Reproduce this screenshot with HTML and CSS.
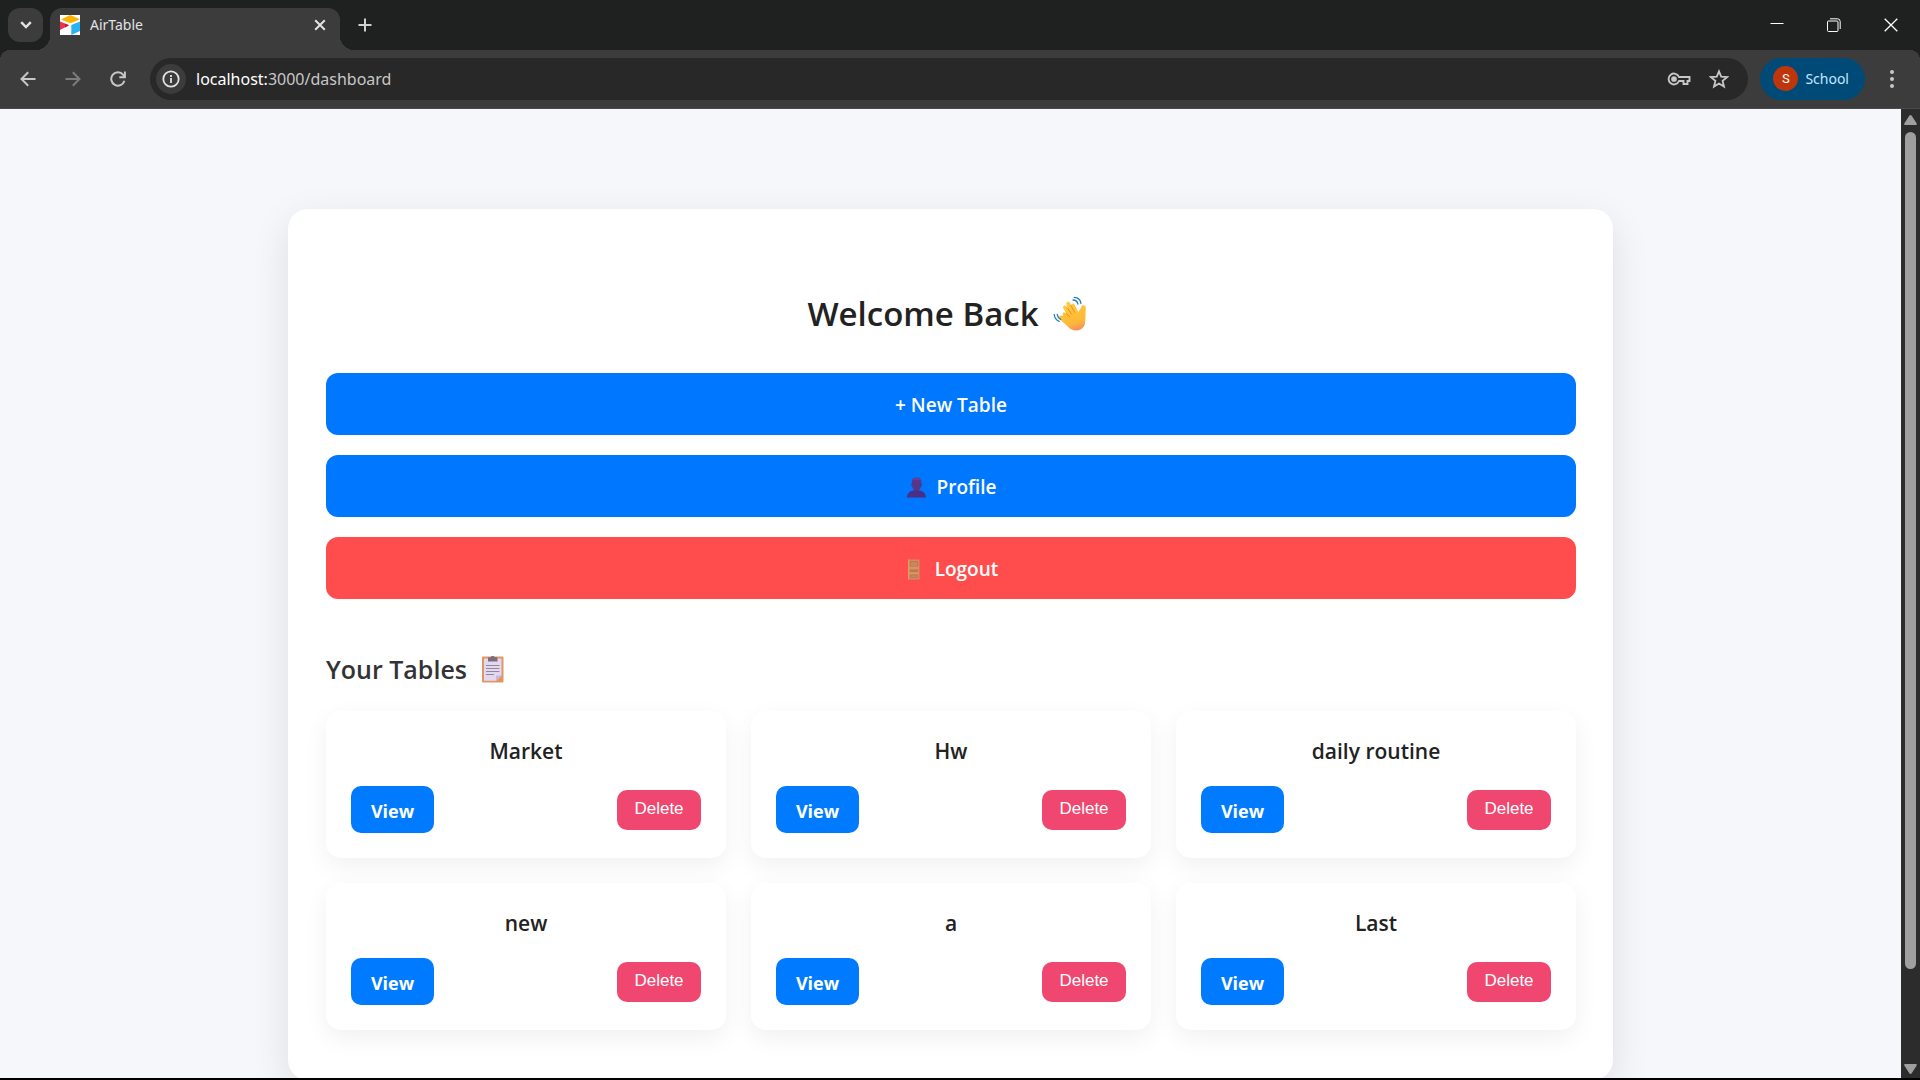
FILE: index.html
```html
<!DOCTYPE html>
<html lang="en">
<head>
<meta charset="utf-8">
<meta name="viewport" content="width=device-width, initial-scale=1">
<title>AirTable</title>
<link rel="stylesheet" href="styles.css">
</head>
<body>
<div class="browser">
  <header class="tabstrip">
    <button class="tab-search" aria-label="Search tabs">
      <svg width="12" height="8" viewBox="0 0 12 8" fill="none" stroke="#e3e3e3" stroke-width="2.4"><path d="M1.2 1.2 6 6l4.800-4.800"/></svg>
    </button>
    <div class="tab">
      <svg class="favicon" width="20" height="20" viewBox="0 0 20 20">
        <rect width="20" height="20" fill="#fff"/>
        <path fill="#fcb400" d="M1 4.500 9.500.3h1.500L19.300 4l-.1.700-8.700 3.500z"/>
        <path fill="#2ab2f5" d="M11.300 10 20 6.600V16l-8.700 4z"/>
        <path fill="#f0304f" d="M0 6.500 9 10.300 0 15z"/>
        <path fill="#ba1e45" d="m4.800 8.500 4.200 1.800-4 2.200z"/>
      </svg>
      <span class="tab-title">AirTable</span>
      <button class="icon-btn" aria-label="Close tab">
        <svg width="12" height="12" viewBox="0 0 12 12" stroke="#e3e3e3" stroke-width="2"><path d="m1.200 1.200 9.600 9.600M10.800 1.200l-9.600 9.600"/></svg>
      </button>
    </div>
    <button class="icon-btn new-tab" aria-label="New tab">
      <svg width="14" height="14" viewBox="0 0 14 14" stroke="#d0d0d0" stroke-width="2"><path d="M7 .5v13M.5 7h13"/></svg>
    </button>
    <div class="window-controls">
      <button class="win-btn" aria-label="Minimize"><svg width="14" height="14" viewBox="0 0 14 14" stroke="#fff"><path d="M.5 5.500h13"/></svg></button>
      <button class="win-btn" aria-label="Restore"><svg width="14" height="14" viewBox="0 0 14 14" fill="none" stroke="#fff"><rect x=".5" y="3" width="10.500" height="10.500" rx="1"/><path d="M3 .8h7.500a2.700 2.700 0 0 1 2.700 2.700V11"/></svg></button>
      <button class="win-btn" aria-label="Close"><svg width="14" height="14" viewBox="0 0 14 14" stroke="#fff" stroke-width="1.300"><path d="m.7.7 12.600 12.600M13.300.7.7 13.300"/></svg></button>
    </div>
  </header>

  <nav class="toolbar">
    <button class="nav-btn" aria-label="Back"><svg width="16" height="16" viewBox="0 0 16 16" fill="none" stroke="#c7c7c7" stroke-width="2"><path d="M15.500 8H2M8.200 1.200 1.500 8l6.700 6.800"/></svg></button>
    <button class="nav-btn" aria-label="Forward"><svg width="16" height="16" viewBox="0 0 16 16" fill="none" stroke="#7c7c7c" stroke-width="2"><path d="M.5 8H14M7.800 1.200 14.500 8l-6.700 6.800"/></svg></button>
    <button class="nav-btn" aria-label="Reload"><svg width="16" height="16" viewBox="0 0 16 16" fill="none" stroke="#c7c7c7" stroke-width="2"><path d="M14.400 9.800A6.700 6.700 0 1 1 13.200 3.800L14.600 6"/><path d="M14.900.6v5.600H9.300"/></svg></button>
    <div class="omnibox">
      <button class="site-info" aria-label="Site information"><svg width="18" height="18" viewBox="0 0 18 18" fill="none" stroke="#e3e3e3" stroke-width="1.800"><circle cx="9" cy="9" r="7.700"/><path d="M9 8v5M9 5v1.900"/></svg></button>
      <span class="url"><span class="host">localhost:</span>3000/dashboard</span>
      <button class="icon-btn" aria-label="Passwords"><svg width="24" height="16" viewBox="0 0 24 16" fill="none" stroke="#c7c7c7" stroke-width="1.900"><path d="M12 6h10.500v4h-2v3h-4v-3H12a5.400 5.400 0 1 1 0-4z"/><circle cx="7" cy="8" r="1.900" fill="#c7c7c7"/></svg></button>
      <button class="icon-btn" aria-label="Bookmark this page"><svg width="20" height="20" viewBox="0 0 20 20" fill="none" stroke="#c7c7c7" stroke-width="1.800"><path d="m10 2.300 2.200 5.300 5.900.5-4.500 3.800 1.400 5.700-5-3.100-5 3.100 1.400-5.700-4.500-3.800 5.900-.5z"/></svg></button>
    </div>
    <button class="profile-chip"><span class="avatar">S</span><span>School</span></button>
    <button class="icon-btn menu-btn" aria-label="Menu"><svg width="4" height="18" viewBox="0 0 4 18" fill="#c7c7c7"><circle cx="2" cy="2" r="2"/><circle cx="2" cy="9" r="2"/><circle cx="2" cy="16" r="2"/></svg></button>
  </nav>

  <div class="viewport">
    <main class="page">
      <section class="dashboard">
        <h1 class="welcome">Welcome Back
          <svg width="36" height="36" viewBox="0 0 36 36" aria-hidden="true">
            <defs><linearGradient id="hand" x1=".3" y1="0" x2=".6" y2="1"><stop offset="0" stop-color="#ffca3e"/><stop offset=".75" stop-color="#ffb836"/><stop offset="1" stop-color="#f59060"/></linearGradient></defs>
            <path fill="url(#hand)" d="M10.200 19.200c-1.600-1.900.5-4 2.300-2.400l1 .9-3.200-5.600c-1.200-2.200 1.600-3.800 3-1.800l1.400 2-1.300-4c-.8-2.500 2.400-3.600 3.500-1.200l1.200 2.500c-.4-2.300 2.500-3 3.400-.9L25.300 16c.9-1.500 2.400-2.900 2.700-4.700.5-2.800 5-2.500 4.800.2l-.5 13.200c0 5.800-3.900 9.800-9 9.800-3.500 0-5.800-1-8.300-3.700l-8.300-7.700c-2-2.200.3-4.600 2.500-3.200z"/>
            <path fill="none" stroke="#e98a22" stroke-width=".9" stroke-linecap="round" d="m13.500 17.700 3.200 3M14.700 12.300l4.200 6.200M18.100 9.600l3.500 6.700"/>
            <path fill="none" stroke="#2a7fc0" stroke-width="1.300" stroke-linecap="round" d="M1.200 18.300c.3 3.600 2.200 6 5 7M4.200 18.300c.3 2.200 1.500 4 3.500 5.200M21.200 1.300c4 .1 6.300 2.600 6.700 6.200M20 4c2.600.1 4.400 1.500 4.900 4"/>
          </svg>
        </h1>

        <div class="actions">
          <button class="action">+ New Table</button>
          <button class="action">
            <svg width="21" height="21" viewBox="0 0 21 21" aria-hidden="true"><path fill="#4a2f86" d="M1 20.500c.2-4.700 3.500-6.500 7.200-7.200l2.300-.5 2.300.5c3.700.7 7 2.500 7.200 7.200z"/><path fill="#56368b" d="M5.800 5.500C5.800 2.500 7.200.8 9.500.8h2.200c2.300 0 3.700 1.700 3.700 4.700v1.200c1 .2 1 2.200-.3 2.500-.5 2.500-2.200 4.600-4.500 4.600S6.600 11.700 6.100 9.200C4.800 8.900 4.800 6.900 5.800 6.700z"/><path fill="#6a3f93" d="M7 2.500C7.600 1.300 8.500.8 9.500.8h2.200c1.200 0 2.100.6 2.700 1.600l-1.600.8H8.400z"/></svg>
            Profile
          </button>
          <button class="action action-danger">
            <svg width="21" height="21" viewBox="0 0 21 21" aria-hidden="true"><rect x="4" y=".5" width="11.500" height="20" rx=".5" fill="#cf8d62"/><path fill="#bf7850" d="M6 2h8v5.500H6zM6 10.500h8v2.500H6zM6 15.500h8v3.500H6z"/><path fill="#c98660" d="M7 3h6v4H7zM7 16.500h6V18H7z"/><path fill="#df9e60" d="M5 8.500h10v1H5zM5 13.800h10v1H5zM4 .5h1v20H4z"/></svg>
            Logout
          </button>
        </div>

        <h2 class="section-title">Your Tables
          <svg width="28" height="28" viewBox="0 0 28 28" aria-hidden="true"><rect x="3" y="1.500" width="21.500" height="26" rx="1" fill="#e19763"/><path fill="#e3d9ef" d="M5 3.500h17.500v17L17 25.800H5z"/><path fill="#c8b8df" d="M17 25.800v-4.300c0-.7.300-1 1-1h4.500z"/><path fill="#7c6c80" d="M9 3.500c0-1 .5-1.300 1.500-1.300h1.300c.3-1.600 3.600-1.600 3.900 0H17c1 0 1.500.3 1.500 1.300v3H9z"/><path stroke="#9385a3" stroke-width="1.200" d="M7 10.500h13.500M7 13.500h13.500M7 16.500h13.500M7 19.500h8"/></svg>
        </h2>

        <div class="table-grid">
          <article class="table-card"><h3>Market</h3><div class="card-actions"><a class="view" href="#">View</a><button class="delete">Delete</button></div></article>
          <article class="table-card"><h3>Hw</h3><div class="card-actions"><a class="view" href="#">View</a><button class="delete">Delete</button></div></article>
          <article class="table-card"><h3>daily routine</h3><div class="card-actions"><a class="view" href="#">View</a><button class="delete">Delete</button></div></article>
          <article class="table-card"><h3>new</h3><div class="card-actions"><a class="view" href="#">View</a><button class="delete">Delete</button></div></article>
          <article class="table-card"><h3>a</h3><div class="card-actions"><a class="view" href="#">View</a><button class="delete">Delete</button></div></article>
          <article class="table-card"><h3>Last</h3><div class="card-actions"><a class="view" href="#">View</a><button class="delete">Delete</button></div></article>
        </div>
      </section>
    </main>
    <div class="scrollbar" aria-hidden="true">
      <svg width="13" height="10" viewBox="0 0 13 10" fill="#9f9f9f"><path d="M6.500 0c.6 0 .9.300 1.200.8l5 7.700c.3.800 0 1.500-.9 1.500H1.200C.3 10 0 9.300.3 8.500l5-7.700C5.600.3 5.900 0 6.500 0z"/></svg>
      <div class="track"><div class="thumb"></div></div>
      <svg width="13" height="10" viewBox="0 0 13 10" fill="#9f9f9f"><path d="M6.500 10c.6 0 .9-.3 1.200-.8l5-7.700c.3-.8 0-1.500-.9-1.500H1.200C.3 0 0 .7.3 1.500l5 7.700c.3.500.6.8 1.200.8z"/></svg>
    </div>
  </div>
</div>
</body>
</html>
```
FILE: styles.css
```css
* {
  box-sizing: border-box;
}

body {
  margin: 0;
  background: #000;
  font-family: "Open Sans", "Noto Sans", sans-serif;
}

h1, h2, h3 {
  margin: 0;
  font-weight: 600;
}

button {
  margin: 0;
  padding: 0;
  border: 0;
  background: none;
  color: inherit;
  font-family: inherit;
  cursor: pointer;
}

svg {
  display: block;
  flex: none;
}

.browser {
  display: flex;
  flex-direction: column;
  height: 100vh;
  padding-bottom: 2px;
}

/* Tab strip */
.tabstrip {
  display: flex;
  align-items: center;
  flex: none;
  height: 50px;
  padding: 8px 1px 0 8px;
  background: #1f2120;
}

.tab-search {
  display: flex;
  align-items: center;
  justify-content: center;
  align-self: flex-start;
  width: 35px;
  height: 34px;
  border-radius: 12px;
  background: #3c3c3c;
}

.tab {
  position: relative;
  display: flex;
  align-items: center;
  gap: 10px;
  width: 290px;
  height: 42px;
  margin-left: 7px;
  padding: 0 8px 8px 10px;
  border-radius: 12px 12px 0 0;
  background: #3c3c3c;
}

.tab::before,
.tab::after {
  content: "";
  position: absolute;
  bottom: 0;
  width: 14px;
  height: 14px;
}

.tab::before {
  right: 100%;
  background: radial-gradient(circle at 0 0, transparent 14px, #3c3c3c 14px);
}

.tab::after {
  left: 100%;
  background: radial-gradient(circle at 100% 0, transparent 14px, #3c3c3c 14px);
}

.tab-title {
  flex: 1;
  color: #e3e3e3;
  font: 14px/20px "Noto Sans", sans-serif;
}

.icon-btn {
  display: flex;
  align-items: center;
  justify-content: center;
  width: 24px;
  height: 24px;
}

.new-tab {
  align-self: flex-start;
  width: 34px;
  height: 34px;
  margin-left: 8px;
}

.window-controls {
  display: flex;
  align-self: flex-start;
  margin-left: auto;
}

.win-btn {
  display: flex;
  align-items: center;
  justify-content: center;
  width: 57px;
  height: 34px;
}

/* Toolbar */
.toolbar {
  display: flex;
  align-items: center;
  flex: none;
  height: 59px;
  padding: 0 16px 1px 5px;
  border-bottom: 1px solid #4a4a4a;
  background:
    radial-gradient(circle at 10px 10px, transparent 10px, #1f2120 10px) 0 0 / 10px 10px no-repeat,
    radial-gradient(circle at 0 10px, transparent 10px, #1f2120 10px) 100% 0 / 10px 10px no-repeat,
    #3c3c3c;
}

.nav-btn {
  display: flex;
  align-items: center;
  justify-content: center;
  width: 45px;
  height: 42px;
}

.omnibox {
  display: flex;
  align-items: center;
  gap: 16px;
  flex: 1;
  height: 42px;
  margin: 0 12px 0 10px;
  padding: 0 17px 0 6px;
  border-radius: 21px;
  background: #282828;
}

.site-info {
  display: flex;
  align-items: center;
  justify-content: center;
  width: 30px;
  height: 30px;
  border-radius: 50%;
  background: #3c3c3c;
}

.url {
  flex: 1;
  margin-left: -6px;
  color: #c7c7c7;
  font-family: "Noto Sans", sans-serif;
  font-size: 16px;
  line-height: 24px;
}

.host {
  color: #fff;
}

.profile-chip {
  display: flex;
  align-items: center;
  gap: 7px;
  height: 42px;
  padding: 0 16px 0 13px;
  border-radius: 21px;
  background: #004a77;
  color: #c2e7ff;
  font: 14px/20px "Noto Sans", sans-serif;
}

.avatar {
  width: 25px;
  height: 25px;
  border-radius: 50%;
  background: #bf360c;
  color: #fff;
  font: 13px/25px Roboto, sans-serif;
}

.menu-btn {
  margin-left: 15px;
}

/* Page area */
.viewport {
  display: flex;
  flex: 1;
  min-height: 0;
}

.page {
  flex: 1;
  min-width: 0;
  padding: 100px 24px 0;
  overflow: hidden;
  background: #f5f7fb;
}

.dashboard {
  max-width: 1325px;
  margin: 0 auto;
  padding: 75px 37px 50px 38px;
  border-radius: 20px;
  background: #fff;
  box-shadow: 0 12px 38px rgba(0, 0, 0, 0.1);
}

.welcome {
  display: flex;
  align-items: center;
  justify-content: center;
  gap: 14px;
  margin-bottom: 29px;
  padding-right: 6px;
  color: #222;
  font-size: 33px;
  line-height: 60px;
}

.actions {
  display: grid;
  gap: 20px;
}

.action {
  display: flex;
  align-items: center;
  justify-content: center;
  gap: 10px;
  height: 62px;
  padding-top: 2px;
  border-radius: 12px;
  background: #0077ff;
  color: #fff;
  font-size: 19px;
  font-weight: 600;
}

.action-danger {
  background: #ff4d4d;
}

.section-title {
  display: flex;
  align-items: center;
  gap: 12px;
  margin: 50px 0 22px;
  color: #333;
  font-size: 25px;
  line-height: 40px;
}

.table-grid {
  display: grid;
  grid-template-columns: repeat(3, minmax(0, 1fr));
  gap: 25px;
}

.table-card {
  padding: 25px;
  border-radius: 15px;
  background: #fff;
  box-shadow: 0 8px 25px rgba(0, 0, 0, 0.06);
}

.table-card h3 {
  margin-bottom: 20px;
  color: #222;
  font-size: 21px;
  line-height: 30px;
  text-align: center;
}

.card-actions {
  display: flex;
  align-items: center;
  justify-content: space-between;
}

.view,
.delete {
  border-radius: 10px;
  color: #fff;
  text-align: center;
}

.view {
  width: 83px;
  padding: 13px 0 10px;
  background: #007bff;
  font-size: 18px;
  font-weight: 700;
  line-height: 24px;
  text-decoration: none;
}

.delete {
  width: 84px;
  height: 40px;
  padding-bottom: 2px;
  background: #ef476f;
  font-family: "Liberation Sans", Arial, sans-serif;
  font-size: 17px;
}

/* Scrollbar */
.scrollbar {
  display: flex;
  flex-direction: column;
  align-items: center;
  gap: 7px;
  flex: none;
  width: 19px;
  padding: 6px 0 4px;
  background: #2c2c2c;
}

.track {
  flex: 1;
}

.thumb {
  width: 11px;
  height: 90.5%;
  border-radius: 6px;
  background: #9f9f9f;
}
```
